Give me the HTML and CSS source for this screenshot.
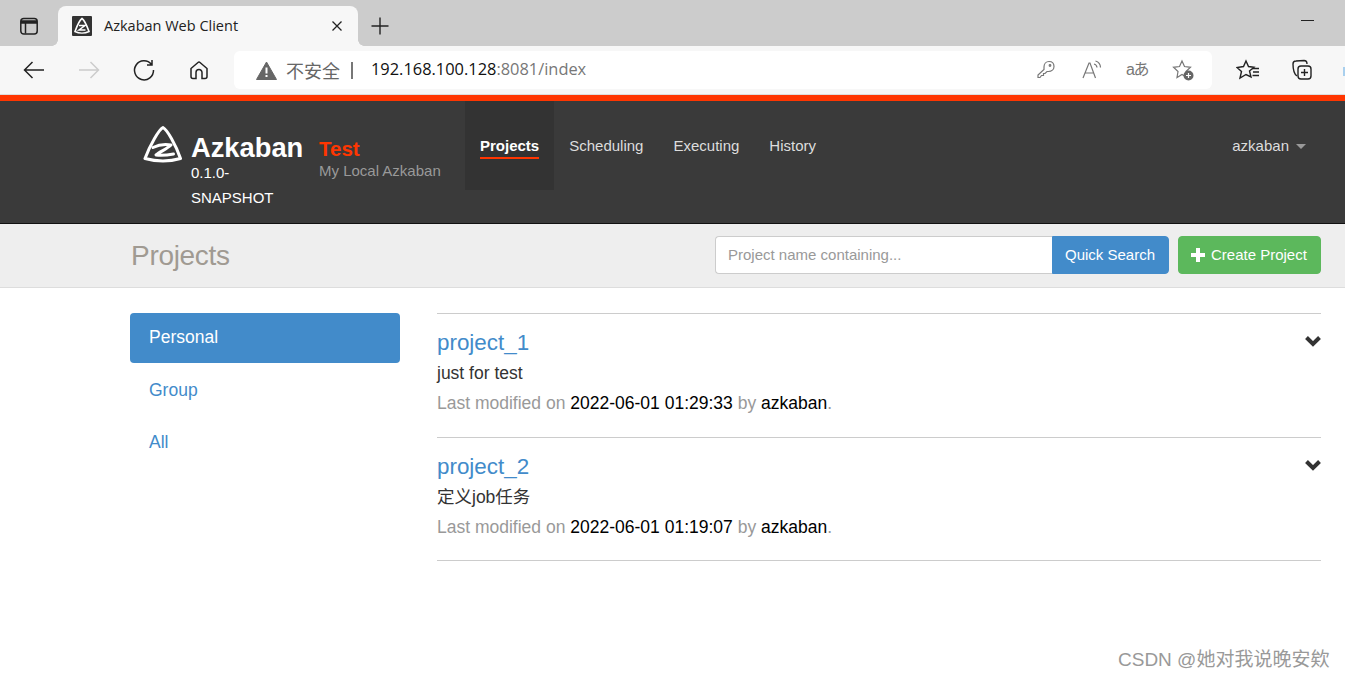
FILE: index.html
```html
<!DOCTYPE html>
<html lang="en">
<head>
<meta charset="utf-8">
<title>Azkaban Web Client</title>
<link rel="stylesheet" href="styles.css">
</head>
<body>
<div class="tabstrip">
  <div class="tabmenu"><svg width="20" height="20" viewBox="0 0 20 20" fill="none" stroke="#222" stroke-width="1.500"><rect x="1.800" y="2.500" width="16.400" height="15.500" rx="3"/><path d="M2 6H18" stroke-width="3.500"/><path d="M6.500 7V17.500"/></svg></div>
  <div class="tab">
    <svg class="favicon" width="20" height="20" viewBox="0 0 20 20"><rect width="20" height="20" rx="1" fill="#333"/><path d="M10 2.500 C12 4 15 10 17 15.500 C13 17.500 7 17.500 3 15.500 C5 10 8 4 10 2.500Z" fill="none" stroke="#fff" stroke-width="1.600"/><path d="M7 9.500H13L7 14H13.500" fill="none" stroke="#fff" stroke-width="1.500"/></svg>
    <span class="tabtitle">Azkaban Web Client</span>
    <svg class="tabclose" width="12" height="12" viewBox="0 0 12 12" stroke="#222" stroke-width="1.300"><path d="M1.500 1.500L10.500 10.500M10.500 1.500L1.500 10.500"/></svg>
  </div>
  <div class="newtab"><svg width="18" height="18" viewBox="0 0 18 18" stroke="#222" stroke-width="1.400"><path d="M9 0.500V17.500M0.500 9H17.500"/></svg></div>
  <div class="minimize"></div>
</div>
<div class="toolbar">
  <div class="navicons">
    <svg width="24" height="24" viewBox="0 0 24 24" fill="none" stroke="#222" stroke-width="1.500"><path d="M22 12H2.500M10.500 4L2.500 12L10.500 20"/></svg>
    <svg width="24" height="24" viewBox="0 0 24 24" fill="none" stroke="#ccc" stroke-width="1.500"><path d="M2 12H21.500M13.500 4L21.500 12L13.500 20"/></svg>
    <svg width="24" height="24" viewBox="0 0 24 24" fill="none" stroke="#222" stroke-width="1.500"><path d="M19.500 6.500A9.500 9.500 0 1 0 21.500 12M20 2V7H15"/></svg>
    <svg class="homeicon" width="22" height="22" viewBox="0 0 22 22" fill="none" stroke="#222" stroke-width="1.500"><path d="M3 9.500L10 3.500C10.600 3 11.400 3 12 3.500L19 9.500V17.500A2 2 0 0 1 17 19.500H14V13.500A3 3 0 0 0 8 13.500V19.500H5A2 2 0 0 1 3 17.500Z"/></svg>
  </div>
  <div class="addressbar">
    <svg class="warn" width="21" height="19" viewBox="0 0 21 19"><path d="M10.500 1L20.500 18.500H0.500Z" fill="#666" stroke="#666" stroke-linejoin="round"/><path d="M10.500 6.500V12.500M10.500 14V16" stroke="#fff" stroke-width="2"/></svg>
    <span class="insecure">不安全</span>
    <span class="sep"></span>
    <span class="url">192.168.100.128<span class="urlrest">:8081/index</span></span>
    <div class="addr-icons">
      <svg class="keyicon" width="18" height="20" viewBox="0 0 18 20" fill="none" stroke="#777" stroke-width="1.200"><path d="M7 7C7 4 9 1.500 12 1.500C15 1.500 17 3.500 17 6.500C17 9.500 14.500 11.500 11.500 11.500L10 11.500L8 13.500H6.500V15.500H4.500L3 17.500H1V15L7 9.500Z"/><circle cx="13" cy="5.500" r="0.800"/></svg>
      <svg width="20" height="20" viewBox="0 0 20 20" fill="none" stroke="#777" stroke-width="1.200"><path d="M1 18L7 3H8L13.500 18M3.500 13H11.500"/><path d="M12 4A4 4 0 0 1 15 7.500M13.500 1A7 7 0 0 1 18.500 7.500"/></svg>
      <span class="translate">aあ</span>
      <svg width="22" height="22" viewBox="0 0 22 22" fill="none" stroke="#777" stroke-width="1.200"><path d="M10 2L12.500 7.500L18.500 8.300L14 12.500L15 18.500L10 15.500L5 18.500L6 12.500L1.500 8.300L7.500 7.500Z"/><circle cx="16.500" cy="16.500" r="5" fill="#666" stroke="none"/><path d="M16.500 14V19M14 16.500H19" stroke="#fff"/></svg>
    </div>
  </div>
  <div class="rightbtns">
    <svg width="24" height="22" viewBox="0 0 24 22" fill="none" stroke="#222" stroke-width="1.400"><path d="M10 2L12.500 7.500L18 8.300L13.500 12L15 18L10 15.500L4 19L5.500 12.500L1 8.500L7.500 7.500Z"/><path d="M16 9.500H23M17 13H23M16.500 16.500H23"/></svg>
    <svg width="22" height="22" viewBox="0 0 22 22" fill="none" stroke="#222" stroke-width="1.400"><path d="M6 17C3 15 2 10 2 5C2 3 3 2 5 2L13 1.500C15 1.500 16 3 16 5"/><rect x="7" y="7" width="13" height="13" rx="3"/><path d="M13.500 10V17M10 13.500H17"/></svg>
    <span class="edgesliver"></span>
  </div>
</div>
<header class="navbar">
  <div class="brand">
    <svg class="logo" width="40" height="38" viewBox="0 0 40 38" fill="none" stroke="#fff" stroke-linejoin="round" stroke-linecap="round"><path d="M20 2.500C24 4.500 33 20 37.500 33.500C27 36.500 13 36.500 2 33.500C7 20 16 4.500 20 2.500Z" stroke-width="3"/><path d="M10 22.500C15 20 22 19 28 20C24 24 17 26.500 13 30C19 30.500 25 30 30.500 29" stroke-width="3"/></svg>
    <div class="brandtext">
      <div class="brandname">Azkaban</div>
      <div class="version">0.1.0-<br>SNAPSHOT</div>
    </div>
    <div class="envinfo">
      <div class="envname">Test</div>
      <div class="envdesc">My Local Azkaban</div>
    </div>
  </div>
  <nav class="mainnav">
    <a class="navitem active"><span>Projects</span></a>
    <a class="navitem"><span>Scheduling</span></a>
    <a class="navitem"><span>Executing</span></a>
    <a class="navitem"><span>History</span></a>
  </nav>
  <div class="usermenu">azkaban<span class="caret"></span></div>
</header>
<section class="pagehead">
  <h1>Projects</h1>
  <div class="headactions">
    <div class="searchgroup">
      <input class="searchinput" type="text" placeholder="Project name containing...">
      <button class="btn btnblue">Quick Search</button>
    </div>
    <button class="btn btngreen"><svg class="plus" width="14" height="14" viewBox="0 0 14 14"><path d="M7 0V14M0 7H14" stroke="#fff" stroke-width="4"/></svg>Create Project</button>
  </div>
</section>
<main class="content">
  <aside class="sidenav">
    <a class="sideitem current">Personal</a>
    <a class="sideitem">Group</a>
    <a class="sideitem">All</a>
  </aside>
  <div class="projects">
    <article class="project">
      <div class="projecttop"><a class="projectname">project_1</a><svg class="chev" width="18" height="13" viewBox="0 0 18 13"><path d="M2.500 2.500L9 9L15.500 2.500" fill="none" stroke="#333" stroke-width="4"/></svg></div>
      <p class="desc">just for test</p>
      <p class="meta">Last modified on <span class="strong">2022-06-01 01:29:33</span> by <span class="strong">azkaban</span>.</p>
    </article>
    <article class="project">
      <div class="projecttop"><a class="projectname">project_2</a><svg class="chev" width="18" height="13" viewBox="0 0 18 13"><path d="M2.500 2.500L9 9L15.500 2.500" fill="none" stroke="#333" stroke-width="4"/></svg></div>
      <p class="desc">定义job任务</p>
      <p class="meta">Last modified on <span class="strong">2022-06-01 01:19:07</span> by <span class="strong">azkaban</span>.</p>
    </article>
  </div>
</main>
<div class="watermark">CSDN @她对我说晚安欸</div>
</body>
</html>
```
FILE: styles.css
```css
* { box-sizing: border-box; }
html, body { margin: 0; padding: 0; height: 680px; overflow: hidden; background: #fff; }
body { font-family: "Liberation Sans", "Noto Sans CJK SC", sans-serif; color: #333; position: relative; }
.tabstrip { height: 46px; background: #cccccc; display: flex; align-items: flex-end; position: relative; }
.tabmenu { width: 58px; height: 46px; display: flex; align-items: center; justify-content: center; padding-top: 6px; }
.tab { width: 300px; height: 40px; background: #f7f7f7; border-radius: 8px 8px 0 0; display: flex; align-items: center; padding: 0 15px 0 14px; font: 14.500px "Open Sans", "Liberation Sans", sans-serif; color: #222; position: relative; }
.tab::before, .tab::after { content: ""; position: absolute; bottom: 0; width: 6px; height: 6px; }
.tab::before { left: -6px; background: radial-gradient(circle at 0 0, #ccc 5.500px, #f7f7f7 6px); }
.tab::after { right: -6px; background: radial-gradient(circle at 100% 0, #ccc 5.500px, #f7f7f7 6px); }
.tabtitle { margin-left: 12px; flex: 1; padding-bottom: 2px; }
.favicon { flex: none; }
.newtab { width: 44px; height: 46px; display: flex; align-items: center; justify-content: center; padding-top: 6px; }
.minimize { position: absolute; left: 1301px; top: 20px; width: 13px; height: 1px; background: #222; }
.toolbar { height: 49px; background: #f7f7f7; display: flex; align-items: center; border-bottom: 1px solid #ddd; }
.navicons { width: 234px; display: flex; align-items: center; gap: 31px; padding-left: 22px; }
.homeicon { margin-left: 1px; }
.addressbar { width: 978px; height: 38px; background: #fff; border-radius: 6px; display: flex; align-items: center; padding-left: 22px; }
.insecure { font-size: 18px; color: #666; margin-left: 9px; font-family: "Noto Sans CJK SC", sans-serif; line-height: 24px; }
.sep { width: 2px; height: 17px; background: #777; margin: 0 18px 0 11px; }
.url { font: 16.400px/20px "Open Sans", "Liberation Sans", sans-serif; color: #111; padding-bottom: 2px; }
.urlrest { color: #777; }
.addr-icons { margin-left: auto; display: flex; align-items: center; gap: 24px; padding-right: 18px; }
.keyicon { margin-right: 3px; }
.translate { width: 22px; font-size: 16px; color: #777; letter-spacing: -1.500px; line-height: 20px; white-space: nowrap; }
.rightbtns { display: flex; align-items: center; gap: 31px; padding-left: 24px; position: relative; flex: 1; }
.edgesliver { position: absolute; right: 0; top: 8px; width: 2px; height: 9px; background: #a9d0ee; }
.navbar { height: 129px; background: #3a3a3a; border-bottom: 1px solid #111; border-top: 6px solid #ff3601; display: flex; padding-left: 143px; position: relative; }
.brand { display: flex; width: 322px; padding-top: 24px; }
.logo { flex: none; margin-right: 8px; }
.brandtext { width: 128px; color: #fff; }
.brandname { font-size: 27.300px; font-weight: 700; line-height: 32px; margin-top: 7px; }
.version { font-size: 15px; line-height: 25px; margin-top: -4px; }
.envinfo { margin-top: 11px; }
.envname { font-size: 20.500px; font-weight: 700; color: #ff3601; line-height: 26px; }
.envdesc { font-size: 15px; color: #999; line-height: 18px; }
.mainnav { display: flex; height: 89px; }
.navitem { height: 89px; padding: 35px 15px 0; font-size: 15px; color: #ddd; }
.navitem span { display: block; height: 23px; line-height: 20px; }
.navitem.active { background: #333333; color: #fff; font-weight: 700; }
.navitem.active span { border-bottom: 2px solid #ff3601; }
.usermenu { position: absolute; right: 39px; top: 35px; font-size: 15px; color: #ddd; line-height: 20px; display: flex; align-items: center; }
.caret { width: 0; height: 0; border-left: 5px solid transparent; border-right: 5px solid transparent; border-top: 5px solid #999; margin-left: 7px; }
.pagehead { height: 64px; background: #eeeeee; border-bottom: 1px solid #ddd; display: flex; align-items: center; justify-content: space-between; padding: 0 24px 0 131px; }
.pagehead h1 { margin: 0; font-size: 28px; font-weight: 400; color: #a09a92; letter-spacing: -0.3px; }
.headactions { display: flex; gap: 9px; margin-bottom: 2px; }
.searchgroup { display: flex; }
.searchinput { width: 337px; height: 38px; border: 1px solid #ccc; border-right: 0; border-radius: 4px 0 0 4px; padding: 0 12px; font: 15px "Liberation Sans", sans-serif; background: #fff; color: #333; outline: 0; }
.searchinput::placeholder { color: #999; opacity: 1; }
.btn { height: 38px; border: 1px solid transparent; font: 15px/20px "Liberation Sans", sans-serif; color: #fff; padding: 0 12px; display: flex; align-items: center; white-space: nowrap; }
.btnblue { width: 117px; background: #428bca; border-color: #428bca; border-radius: 0 4px 4px 0; }
.btngreen { width: 143px; background: #5cb85c; border-color: #5cb85c; border-radius: 4px; }
.plus { margin-right: 6px; flex: none; }
.content { display: flex; padding: 25px 24px 0 130px; }
.sidenav { width: 270px; display: flex; flex-direction: column; gap: 2px; flex: none; }
.sideitem { height: 50px; padding: 0 19px; display: flex; align-items: center; border-radius: 4px; font-size: 17.500px; color: #428bca; }
.sideitem.current { background: #428bca; color: #fff; padding-bottom: 2px; }
.projects { margin-left: 37px; flex: 1; border-top: 1px solid #ccc; }
.project { height: 124px; border-bottom: 1px solid #ccc; padding-top: 13px; }
.project:last-child { height: 123px; }
.projecttop { display: flex; justify-content: space-between; }
.projectname { font-size: 22.400px; line-height: 32px; color: #428bca; }
.chev { margin: 8px -1px 0 0; }
.desc { margin: -1px 0 0; font-size: 17.500px; line-height: 30px; color: #333; }
.meta { margin: 0; font-size: 17.500px; line-height: 30px; color: #999; }
.strong { color: #000; }
.watermark { position: absolute; left: 1118px; top: 648px; font-size: 19px; line-height: 24px; color: #999; white-space: nowrap; }
```
